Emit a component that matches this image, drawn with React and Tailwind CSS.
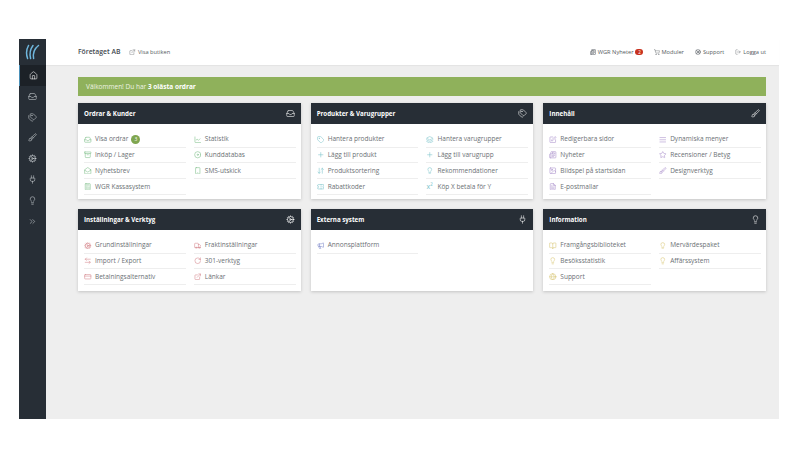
import React from "react";
import { Home, Inbox, Tags, Cog, Plug, Lightbulb, ChevronsRight, ExternalLink, Newspaper, ShoppingCart, LifeBuoy, LogOut, LineChart, Archive, Disc, MailOpen, Smartphone, Calculator, Layers, Plus, ArrowDownUp, Ticket, SquarePen, AlignJustify, Star, Image, FileText, Truck, ArrowLeftRight, RotateCw, CreditCard, Megaphone, BookOpen, Globe, Brush, Tag } from "lucide-react";

const XSquared = ({ className }) => <span className={`${className} text-[7px] leading-none w-[7.5px]`}>x²</span>;

const cards = [
  { title: "Ordrar & Kunder", H: Inbox, color: "text-[#7fbf8a]", items: [
    [Inbox, "Visa ordrar", "3"], [LineChart, "Statistik"], [Archive, "Inköp / Lager"], [Disc, "Kunddatabas"], [MailOpen, "Nyhetsbrev"], [Smartphone, "SMS-utskick"], [Calculator, "WGR Kassasystem"] ] },
  { title: "Produkter & Varugrupper", H: Tags, color: "text-[#7cc4cc]", items: [
    [Tag, "Hantera produkter"], [Layers, "Hantera varugrupper"], [Plus, "Lägg till produkt"], [Plus, "Lägg till varugrupp"], [ArrowDownUp, "Produktsortering"], [Lightbulb, "Rekommendationer"], [Ticket, "Rabattkoder"], [XSquared, "Köp X betala för Y"] ] },
  { title: "Innehåll", H: Brush, color: "text-[#a98fcb]", items: [
    [SquarePen, "Redigerbara sidor"], [AlignJustify, "Dynamiska menyer"], [Newspaper, "Nyheter"], [Star, "Recensioner / Betyg"], [Image, "Bildspel på startsidan"], [Brush, "Designverktyg"], [FileText, "E-postmallar"] ] },
  { title: "Inställningar & Verktyg", H: Cog, color: "text-[#d68a8f]", items: [
    [Cog, "Grundinställningar"], [Truck, "Fraktinställningar"], [ArrowLeftRight, "Import / Export"], [RotateCw, "301-verktyg"], [CreditCard, "Betalningsalternativ"], [ExternalLink, "Länkar"] ] },
  { title: "Externa system", H: Plug, color: "text-[#7d88c9]", items: [[Megaphone, "Annonsplattform"]] },
  { title: "Information", H: Lightbulb, color: "text-[#d9c77a]", items: [
    [BookOpen, "Framgångsbiblioteket"], [Lightbulb, "Mervärdespaket"], [Lightbulb, "Besöksstatistik"], [Lightbulb, "Affärssystem"], [Globe, "Support"] ] },
];

const side = [Inbox, Tags, Brush, Cog, Plug, Lightbulb, ChevronsRight];

function Card({ c, h }) {
  const H = c.H;
  return (
    <div className={`bg-white shadow-[0_1px_3px_rgba(0,0,0,0.18)] ${h}`}>
      <div className="h-[21px] bg-[#272e36] flex items-center justify-between px-[6px] text-white">
        <span className="text-[6.2px] font-bold">{c.title}</span>
        <H size={9} strokeWidth={1.5} />
      </div>
      <div className="grid grid-cols-2 gap-x-[8px] pl-[6px] pr-[5px] pt-[8px]">
        {c.items.map(([I, t, b]) => (
          <div key={t} className="h-[15.7px] border-b border-[#eeeeee] flex items-center text-[6.5px] text-[#6b7074]">
            <I size={7.5} strokeWidth={1.8} className={`${c.color} shrink-0 mr-[3.5px]`} />
            <span>{t}</span>
            {b && <span className="ml-[3px] w-[9px] h-[9px] rounded-full bg-[#7fa650] text-white text-[5px] flex items-center justify-center">{b}</span>}
          </div>
        ))}
      </div>
    </div>
  );
}

export default function App() {
  return (
    <div className="w-[800px] h-[460px] bg-white pt-[39px] pl-[19px] font-['Open_Sans',sans-serif]">
      <div className="w-[760px] h-[380px] flex">
        <aside className="w-[27px] bg-[#272e36] flex flex-col items-center text-[#c9ced3]">
          <div className="h-[26px] flex items-center justify-center">
            <svg width="15" height="16" viewBox="0 0 15 16" fill="none" stroke="#6fb6dc" strokeWidth="1.5" strokeLinecap="round">
              <path d="M3.5 1.5C1.2 5.5 1 10 2.6 14.5" />
              <path d="M8 1.5C5 5.5 4.4 10 5.6 14.5" />
              <path d="M13.5 1.5C9.5 4.5 7.8 9.5 8.6 14.5" />
            </svg>
          </div>
          <div className="w-full h-[21px] bg-[#1c2127] border-l border-[#4a90b8] flex items-center justify-center text-white">
            <Home size={9} strokeWidth={1.5} />
          </div>
          {side.map((I, i) => (
            <div key={i} className="w-full h-[20.8px] flex items-center justify-center">
              <I size={9} strokeWidth={1.5} />
            </div>
          ))}
        </aside>
        <div className="flex-1 flex flex-col bg-[#eeeeee]">
          <header className="h-[26px] bg-white flex items-center pl-[32px] pr-[13px] text-[5.7px] text-[#555b60] shadow-[0_1px_1px_rgba(0,0,0,0.04)]">
            <span className="text-[6.8px] font-semibold text-[#444a50]">Företaget AB</span>
            <span className="ml-[9px] flex items-center gap-[2px]"><ExternalLink size={6.5} strokeWidth={1.4} />Visa butiken</span>
            <div className="ml-auto flex items-center gap-[11px]">
              <span className="flex items-center gap-[2px]"><Newspaper size={6} strokeWidth={2} />WGR Nyheter<span className="w-[8px] h-[6px] rounded-full bg-[#c8321f] text-white text-[4.5px] flex items-center justify-center">2</span></span>
              <span className="flex items-center gap-[1px]"><ShoppingCart size={6} strokeWidth={1.6} />Moduler</span>
              <span className="flex items-center gap-[2px]"><LifeBuoy size={6} strokeWidth={2} />Support</span>
              <span className="flex items-center gap-[2px]"><LogOut size={6} strokeWidth={1.5} />Logga ut</span>
            </div>
          </header>
          <main className="pl-[32px] pr-[13px] pt-[12px]">
            <div className="h-[19px] bg-[#8fb15b] flex items-center pl-[8px] text-[6.5px] text-[#eef3e4]">
              Välkommen! Du har&nbsp;<b className="font-bold text-white">3 olästa ordrar</b>
            </div>
            <div className="grid grid-cols-3 gap-x-[10px] gap-y-[10px] mt-[7px]">
              {cards.map((c, i) => <Card key={c.title} c={c} h={i < 3 ? "h-[96px]" : "h-[82px]"} />)}
            </div>
          </main>
        </div>
      </div>
    </div>
  );
}
